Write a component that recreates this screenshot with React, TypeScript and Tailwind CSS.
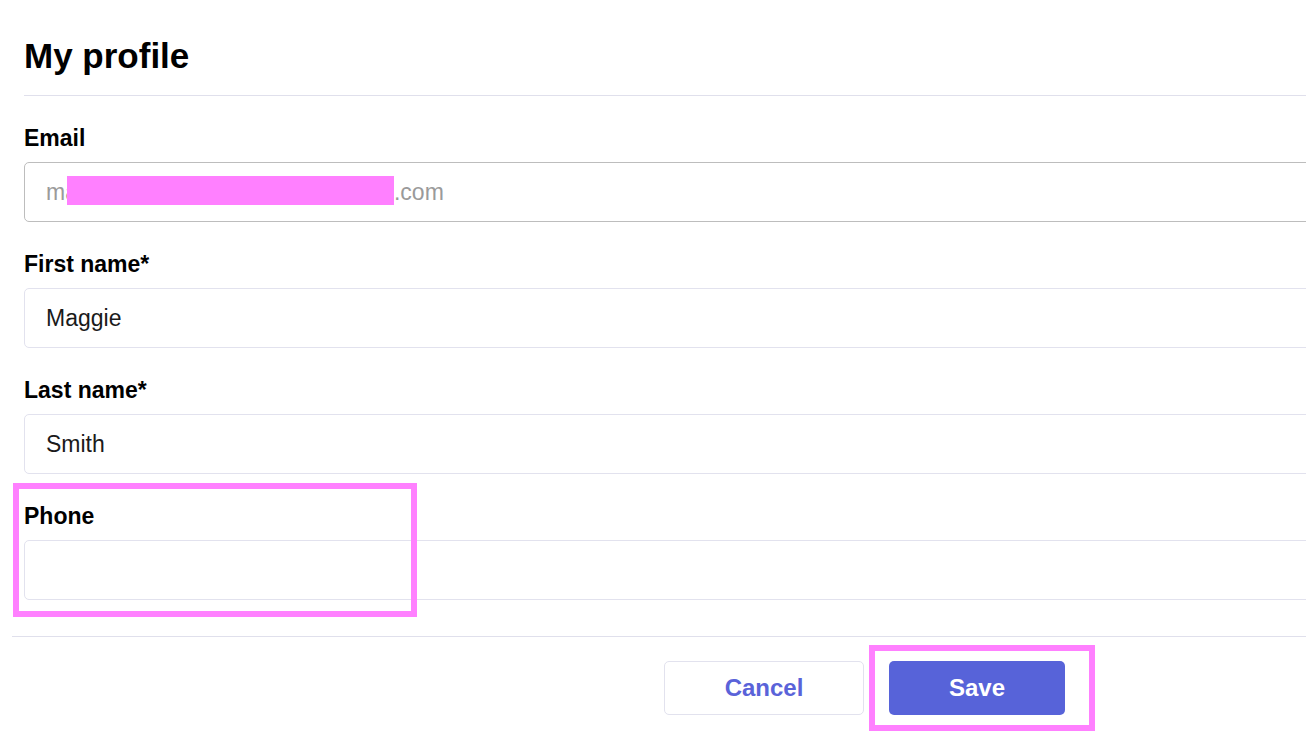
import React from "react";

const font = { fontFamily: '"Liberation Sans", Arial, sans-serif' };

function Field({ label, children, muted }: { label: string; children?: React.ReactNode; muted?: boolean }) {
  return (
    <div className="flex flex-col">
      <label className="text-[23px] leading-[26px] font-bold text-black mb-[11px]">{label}</label>
      <div
        className={
          "h-[60px] w-full rounded-[5px] border flex items-center pl-[21px] text-[23px] bg-white " +
          (muted ? "border-[#bdbdbd] text-[#9a9a9a]" : "border-[#e2e2ee] text-[#1a1a1a]")
        }
      >
        {children}
      </div>
    </div>
  );
}

export default function App() {
  return (
    <div className="w-[1306px] h-[732px] overflow-hidden bg-white" style={font}>
      <div className="w-[1440px] ml-[12px]">
        <div className="px-[12px]">
          <div className="pt-[36px] pb-[19px] border-b border-[#e0e0ec]">
            <h1 className="text-[35px] leading-[40px] font-bold text-black">My profile</h1>
          </div>
          <div className="pt-[29px] flex flex-col gap-[29px]">
            <Field label="Email" muted>
              <span>ma</span>
              <span className="inline-block w-[327px] h-[29px] bg-[#ff80ff] -ml-[11px] mt-[-4px]" />
              <span>.com</span>
            </Field>
            <Field label="First name*">Maggie</Field>
            <Field label="Last name*">Smith</Field>
            <div className="relative">
              <Field label="Phone" />
              <div className="absolute left-[-11px] top-[-20px] w-[404px] h-[134px] border-[6px] border-[#ff80ff] pointer-events-none" />
            </div>
          </div>
        </div>
        <div className="mt-[36px] border-t border-[#e0e0ec] pt-[24px] pl-[652px] flex gap-[25px]">
          <button className="w-[200px] h-[54px] rounded-[5px] border border-[#e2e2ee] bg-white text-[24px] font-bold text-[#5a63d9]">
            Cancel
          </button>
          <div className="relative">
            <button className="w-[176px] h-[54px] rounded-[5px] bg-[#5763d9] text-[24px] font-bold text-white">
              Save
            </button>
            <div className="absolute left-[-20px] top-[-16px] w-[226px] h-[86px] border-[6px] border-[#ff80ff] pointer-events-none" />
          </div>
        </div>
      </div>
    </div>
  );
}
